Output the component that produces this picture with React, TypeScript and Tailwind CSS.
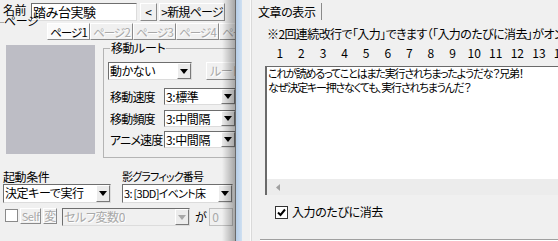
import React from "react";

const font =
  "font-['Noto_Sans_CJK_JP','Noto_Sans',sans-serif] [font-feature-settings:'palt'] tracking-[-0.4px]";

function Arrow({ disabled }: { disabled?: boolean }) {
  return (
    <svg width="8" height="5" viewBox="0 0 8 5">
      <path d="M0 0h8L4 5z" fill={disabled ? "#a8a8a8" : "#000"} />
    </svg>
  );
}

function DropButton({ disabled }: { disabled?: boolean }) {
  return (
    <div className="flex w-[14px] shrink-0 items-center justify-center border border-t-white border-l-white border-r-[#7a7a7a] border-b-[#7a7a7a] bg-[#ececec]">
      <Arrow disabled={disabled} />
    </div>
  );
}

function Select({
  text,
  className,
  disabled,
}: {
  text: string;
  className: string;
  disabled?: boolean;
}) {
  return (
    <div
      className={`flex items-stretch border border-t-[#6e6e6e] border-l-[#6e6e6e] border-r-[#dcdcdc] border-b-[#dcdcdc] ${
        disabled ? "bg-[#f0f0f0] text-[#a8a8a8] [text-shadow:1px_1px_0_#fff]" : "bg-white text-black"
      } ${className}`}
    >
      <span className="flex-1 overflow-hidden whitespace-nowrap pl-[1px] leading-[16px]">
        {text}
      </span>
      <DropButton disabled={disabled} />
    </div>
  );
}

function Button({
  children,
  className,
  disabled,
}: {
  children: React.ReactNode;
  className: string;
  disabled?: boolean;
}) {
  return (
    <div
      className={`flex items-center justify-center overflow-hidden whitespace-nowrap border border-t-white border-l-white border-r-[#8a8a8a] border-b-[#8a8a8a] bg-[#f0f0f0] leading-[14px] ${
        disabled ? "text-[#a8a8a8] [text-shadow:1px_1px_0_#fff]" : "text-black"
      } ${className}`}
    >
      {children}
    </div>
  );
}

function Tab({ label, active }: { label: string; active?: boolean }) {
  return (
    <div
      className={`flex h-[17px] w-[43px] shrink-0 items-center justify-center overflow-hidden whitespace-nowrap border border-t-white border-l-white border-r-[#8a8a8a] border-b-[#8a8a8a] text-[11.5px] leading-[14px] tracking-[-0.9px] ${
        active
          ? "bg-[#fafafa] text-black"
          : "bg-[#f0f0f0] text-[#a8a8a8] [text-shadow:1px_1px_0_#fff]"
      }`}
    >
      {label}
    </div>
  );
}

function Row({ label, value }: { label: string; value: string }) {
  return (
    <div className="flex h-[21.5px] items-start">
      <span className="w-[54px] shrink-0 whitespace-nowrap pt-[1px] text-[12px] leading-[16px] tracking-[-0.8px]">
        {label}
      </span>
      <Select text={value} className="h-[17px] w-[72px] shrink-0 text-[12px]" />
    </div>
  );
}

function LeftWindow() {
  return (
    <div className="relative h-[241px] w-[236px] shrink-0 overflow-hidden bg-[#f0f0f0] text-black">
      {/* name row */}
      <div className="ml-[3px] mt-[3px] flex h-[18px] items-start">
        <span className="w-[28px] shrink-0 whitespace-nowrap text-[12px] leading-[14px]">名前</span>
        <div className="h-[18px] w-[106px] shrink-0 whitespace-nowrap border border-t-[#6e6e6e] border-l-[#6e6e6e] border-r-[#dcdcdc] border-b-[#dcdcdc] bg-white pl-[1px] text-[13px] leading-[16px]">
          踏み台実験
        </div>
        <Button className="ml-[3px] h-[18px] w-[17px] shrink-0 text-[12px]">&lt;</Button>
        <Button className="ml-[2px] h-[18px] w-[66px] shrink-0 text-[12px] tracking-[-0.8px]">
          &gt;新規ページ
        </Button>
      </div>

      {/* page group caption */}
      <div className="absolute left-0 top-[22px] h-px w-[4px] bg-[#a8a8a8]" />
      <span className="absolute left-[4px] top-[15px] whitespace-nowrap text-[12px] leading-[12px]">
        ページ
      </span>

      {/* tabs */}
      <div className="ml-[47px] mt-[2px] flex">
        <Tab label="ページ1" active />
        <Tab label="ページ2" />
        <Tab label="ページ3" />
        <Tab label="ページ4" />
        <Tab label="ページ5" />
      </div>

      {/* image + route group */}
      <div className="flex items-start">
        <div className="ml-[6px] mt-[5px] h-[109px] w-[89px] shrink-0 bg-[#bdbdc5]" />
        <div className="relative ml-[8px] mt-[8px] h-[110px] w-[140px] shrink-0 border border-[#b4b4b4] pl-[4px] pt-[13px]">
          <span className="absolute -top-[8px] left-[6px] whitespace-nowrap bg-[#f0f0f0] px-[1px] text-[12px] leading-[14px]">
            移動ルート
          </span>
          <div className="flex items-start">
            <Select text="動かない" className="h-[18px] w-[84px] shrink-0 text-[12px]" />
            <Button disabled className="ml-[14px] h-[18px] w-[40px] shrink-0 justify-start pl-[3px] text-[12px]">
              ルート
            </Button>
          </div>
          <div className="ml-[2px] mt-[8px] flex flex-col">
            <Row label="移動速度" value="3:標準" />
            <Row label="移動頻度" value="3:中間隔" />
            <Row label="アニメ速度" value="3:中間隔" />
          </div>
        </div>
      </div>

      {/* start condition / shadow graphic */}
      <div className="ml-[3px] mt-[12px] flex items-start">
        <div className="flex w-[119px] shrink-0 flex-col">
          <span className="whitespace-nowrap text-[12px] leading-[13px]">起動条件</span>
          <Select text="決定キーで実行" className="mt-[1px] h-[19px] w-[108px] text-[12px]" />
        </div>
        <div className="flex flex-col">
          <span className="whitespace-nowrap text-[11px] leading-[13px] tracking-[-0.8px]">
            影グラフィック番号
          </span>
          <Select
            text="3: [3DD]イベント床"
            className="mt-[1px] h-[19px] w-[111px] text-[11px] tracking-[-0.7px]"
          />
        </div>
      </div>

      {/* self variable row */}
      <div className="ml-[5px] mt-[5px] flex items-start">
        <div className="mt-[1px] h-[13px] w-[13px] shrink-0 border border-[#8a8a8a] bg-white" />
        <Button disabled className="ml-[2px] h-[16px] w-[21px] shrink-0 text-[11px]">
          Self
        </Button>
        <Button disabled className="ml-[2px] h-[16px] w-[14px] shrink-0 text-[12px]">
          変
        </Button>
        <Select
          disabled
          text="セルフ変数0"
          className="ml-[5px] h-[18px] w-[128px] shrink-0 text-[12px]"
        />
        <span className="ml-[5px] shrink-0 whitespace-nowrap pt-[1px] text-[12px] leading-[16px]">が</span>
        <div className="ml-[3px] h-[18px] w-[24px] shrink-0 border border-[#c0c0c0] bg-[#f0f0f0] pl-[2px] text-[12px] leading-[16px] text-[#a8a8a8]">
          0
        </div>
      </div>

      {/* shadow cast by the right window */}
      <div className="absolute right-0 top-0 h-full w-[14px] bg-gradient-to-r from-[#00000000] to-[#00000055]" />
      <div className="absolute right-0 top-0 h-full w-px bg-[#6a6a6a]" />
    </div>
  );
}

function RightWindow() {
  const nums = Array.from({ length: 14 }, (_, i) => i + 1);
  return (
    <div className="flex h-[241px] flex-1 overflow-hidden bg-[#f0f0f0] text-black">
      <div className="w-[9px] shrink-0 border-r border-r-[#fbfbfb]" />
      <div className="flex min-w-0 flex-1 flex-col border-l border-l-[#dadada]">
        {/* tab */}
        <div className="ml-[2px] mt-[3px] flex h-[17px] w-[68px] items-center whitespace-nowrap border-r border-r-[#8a8a8a] pl-[4px] text-[12px] leading-[14px]">
          文章の表示
        </div>
        <div className="ml-[15px] mt-[7px] whitespace-nowrap text-[12px] leading-[14px] tracking-[-0.6px]">
          ※2回連続改行で「入力」できます（「入力のたびに消去」がオンの時）
        </div>
        <div className="ml-[17px] mt-[6px] flex whitespace-nowrap text-[12px] leading-[12px] tracking-normal">
          {nums.map((n) => (
            <span key={n} className="w-[21.6px] shrink-0 text-center">
              {n}
            </span>
          ))}
        </div>
        {/* text box */}
        <div className="ml-[13px] mt-[7px] flex h-[129px] flex-col border-l-2 border-t border-l-[#6a6a6a] border-t-[#6a6a6a] bg-white">
          <div className="flex-1 whitespace-nowrap pl-[1px] text-[11px] leading-[13.5px] tracking-[-1.2px]">
            <div>これが読めるってことはまた実行されちまったようだな？兄弟！</div>
            <div>なぜ決定キー押さなくても、実行されちまうんだ？</div>
          </div>
          <div className="flex h-[16px] items-center bg-[#ececec] pl-[9px]">
            <svg width="4" height="7" viewBox="0 0 4 7">
              <path d="M4 0v7L0 3.5z" fill="#a0a0a0" />
            </svg>
          </div>
        </div>
        <div className="ml-[23px] mt-[10px] flex items-center">
          <div className="flex h-[13px] w-[13px] items-center justify-center border border-[#333] bg-white">
            <svg width="9" height="9" viewBox="0 0 9 9">
              <path d="M1 4.5l2.5 2.5L8 1.5" stroke="#000" strokeWidth="2" fill="none" />
            </svg>
          </div>
          <span className="ml-[4px] whitespace-nowrap text-[12px] leading-[14px]">入力のたびに消去</span>
        </div>
        <div className="flex-1" />
        <div className="ml-[8px] h-[2px] border-t border-t-[#a0a0a0] bg-white" />
      </div>
    </div>
  );
}

export default function App() {
  return (
    <div className={`flex h-[241px] w-[558px] overflow-hidden ${font}`}>
      <LeftWindow />
      <div className="w-[6px] shrink-0 bg-gradient-to-r from-[#b6cde6] to-[#cfe0f2]" />
      <RightWindow />
    </div>
  );
}
